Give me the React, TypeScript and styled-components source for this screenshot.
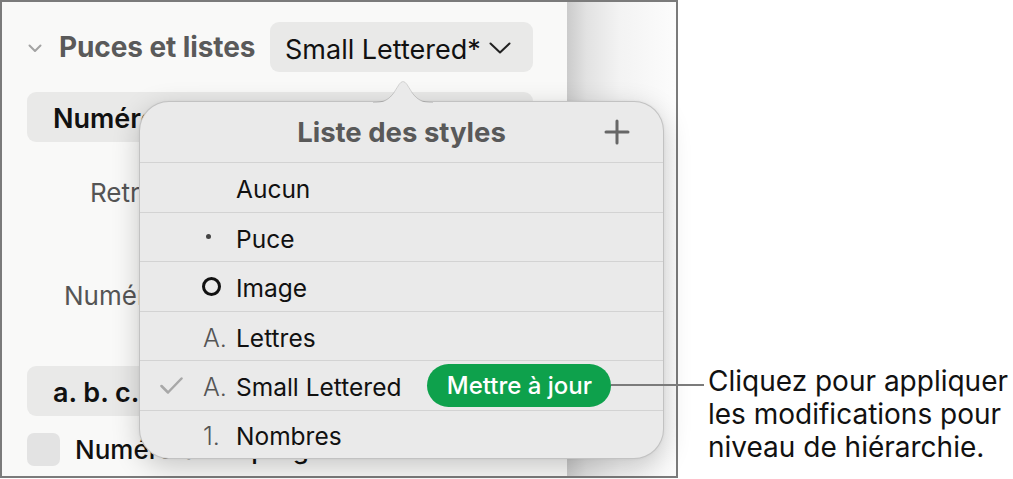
import React from "react";
import styled, { createGlobalStyle } from "styled-components";

const Global = createGlobalStyle`
  html, body { margin: 0; padding: 0; background: #ffffff; }
  body {
    font-family: Inter, "Noto Sans", "Liberation Sans", sans-serif;
    -webkit-font-smoothing: antialiased;
  }
`;

const Page = styled.div`
  display: flex;
  align-items: flex-start;
  width: 1013px;
  height: 479px;
  overflow: hidden;
`;

const Frame = styled.div`
  position: relative;
  display: flex;
  flex: none;
  width: 678px;
  height: 478px;
  box-sizing: border-box;
  border: 2px solid #7b7b7b;
`;

const Sidebar = styled.div`
  flex: none;
  width: 565px;
  box-sizing: border-box;
  padding: 20px 34px 0 25px;
  background: #f9f9f8;
  display: flex;
  flex-direction: column;
  overflow: hidden;
`;

const Shade = styled.div`
  flex: 1;
  background: linear-gradient(90deg, #cbcbcb 0%, #e2e2e2 18%, #f3f3f3 48%, #fcfcfc 100%);
`;

const SectionHeader = styled.div`
  display: flex;
  align-items: center;
  height: 50px;
  flex: none;
`;

const Disclosure = styled.svg`
  flex: none;
  width: 14px;
  height: 9px;
  margin: 2px 17px 0 1px;
`;

const SectionTitle = styled.span`
  font-size: 28px;
  font-weight: 700;
  color: #5a5a5a;
  white-space: nowrap;
  letter-spacing: -0.1px;
`;

const StyleSelect = styled.div`
  margin-left: auto;
  flex: none;
  width: 263px;
  height: 50px;
  box-sizing: border-box;
  border-radius: 9px;
  background: #e9e9e8;
  display: flex;
  align-items: center;
  padding: 4px 0 0 15px;
  gap: 8px;
  font-size: 27px;
  color: #111;
  white-space: nowrap;
`;

const SelectChevron = styled.svg`
  width: 22px;
  height: 12px;
  flex: none;
  margin-top: -2px;
`;

const WideButton = styled.div<{ $top: number }>`
  flex: none;
  margin-top: ${(p) => p.$top}px;
  height: 50px;
  box-sizing: border-box;
  padding: 3px 0 0 26px;
  border-radius: 9px;
  background: #e9e9e8;
  display: flex;
  align-items: center;
  font-size: 27px;
  font-weight: 600;
  color: #111;
  white-space: nowrap;
`;

const FieldRow = styled.div<{ $top: number; $indent: number }>`
  flex: none;
  margin-top: ${(p) => p.$top}px;
  height: 50px;
  display: flex;
  align-items: center;
  padding-left: ${(p) => p.$indent}px;
  font-size: 26px;
  color: #555;
  white-space: nowrap;
`;

const CheckRow = styled.div<{ $top: number }>`
  flex: none;
  margin-top: ${(p) => p.$top}px;
  display: flex;
  align-items: center;
  gap: 15px;
  font-size: 26px;
  font-weight: 500;
  color: #111;
  white-space: nowrap;
`;

const CheckBox = styled.div`
  flex: none;
  width: 33px;
  height: 33px;
  border-radius: 7px;
  background: #e3e3e3;
`;

const Popover = styled.div`
  position: absolute;
  left: 137px;
  top: 99px;
  width: 525px;
  height: 358px;
  box-sizing: border-box;
  background: #eaeaea;
  border: 1px solid rgba(0, 0, 0, 0.17);
  border-radius: 30px;
  box-shadow: 0 8px 28px rgba(0, 0, 0, 0.2), 0 0 3px rgba(0, 0, 0, 0.06);
  display: flex;
  flex-direction: column;
`;

const Arrow = styled.svg`
  position: absolute;
  left: 233px;
  top: -24px;
  width: 60px;
  height: 25px;
`;

const PopHeader = styled.div`
  flex: none;
  height: 60px;
  border-bottom: 1px solid #d3d3d3;
  display: grid;
  grid-template-columns: 1fr auto 1fr;
  align-items: center;
`;

const PopTitle = styled.div`
  grid-column: 2;
  font-size: 27.5px;
  font-weight: 700;
  color: #595959;
  white-space: nowrap;
`;

const AddIcon = styled.svg`
  grid-column: 3;
  justify-self: end;
  margin-right: 33px;
  width: 26px;
  height: 26px;
`;

const StyleRow = styled.div<{ $last?: boolean }>`
  flex: none;
  height: ${(p) => (p.$last ? 47 : 48.5)}px;
  border-bottom: ${(p) => (p.$last ? "none" : "1px solid #d3d3d3")};
  display: grid;
  grid-template-columns: 63px 33px auto auto;
  justify-content: start;
  align-items: center;
`;

const CheckCell = styled.div`
  display: flex;
  justify-content: center;
  align-items: center;
`;

const Prefix = styled.div`
  display: flex;
  align-items: center;
  padding-top: 4px;
  font-size: 25px;
  font-weight: 300;
  color: #555;
  min-height: 20px;
`;

const Dot = styled.span`
  width: 5px;
  height: 5px;
  border-radius: 50%;
  background: #444;
  margin: 0 0 4px 3px;
`;

const Ring = styled.span`
  width: 19px;
  height: 19px;
  box-sizing: border-box;
  border: 3px solid #111;
  border-radius: 50%;
  margin: 0 0 4px -1px;
`;

const Label = styled.div`
  padding-top: 4px;
  font-size: 24.5px;
  color: #111;
  white-space: nowrap;
`;

const UpdateButton = styled.div`
  position: relative;
  margin-left: 26px;
  width: 184px;
  height: 43px;
  border-radius: 22px;
  background: #0ea14c;
  color: #fff;
  font-size: 24px;
  font-weight: 500;
  display: flex;
  align-items: center;
  justify-content: center;
  white-space: nowrap;

  &::after {
    content: "";
    position: absolute;
    left: 100%;
    top: 50%;
    margin-top: -1px;
    width: 93px;
    height: 2px;
    background: #7b7b7b;
  }
`;

const Annotation = styled.div`
  margin-left: 30px;
  padding-top: 365px;
  font-size: 28px;
  line-height: 33px;
  color: #111;
  white-space: nowrap;
`;

type Item = { prefix: React.ReactNode; label: string; checked?: boolean };

const items: Item[] = [
  { prefix: null, label: "Aucun" },
  { prefix: <Dot />, label: "Puce" },
  { prefix: <Ring />, label: "Image" },
  { prefix: "A.", label: "Lettres" },
  { prefix: "A.", label: "Small Lettered", checked: true },
  { prefix: "1.", label: "Nombres" },
];

export default function App() {
  return (
    <>
      <Global />
      <Page>
        <Frame>
          <Sidebar>
            <SectionHeader>
              <Disclosure viewBox="0 0 14 9">
                <polyline points="1.5,1.5 7,7 12.5,1.5" fill="none" stroke="#a3a3a3" strokeWidth="2" strokeLinecap="round" strokeLinejoin="round" />
              </Disclosure>
              <SectionTitle>Puces et listes</SectionTitle>
              <StyleSelect>
                Small Lettered*
                <SelectChevron viewBox="0 0 22 12">
                  <polyline points="1.5,1.5 11,10.5 20.5,1.5" fill="none" stroke="#222" strokeWidth="2" strokeLinecap="round" strokeLinejoin="round" />
                </SelectChevron>
              </StyleSelect>
            </SectionHeader>
            <WideButton $top={20}>Numérotation</WideButton>
            <FieldRow $top={25} $indent={63}>Retrait</FieldRow>
            <FieldRow $top={53} $indent={37}>Numérotation</FieldRow>
            <WideButton $top={46}>a. b. c.</WideButton>
            <CheckRow $top={17}>
              <CheckBox />
              Numérotation progressive
            </CheckRow>
          </Sidebar>
          <Shade />
          <Popover>
            <Arrow viewBox="0 0 60 25">
              <path d="M0,25 C11,25 16,22 21,15 L26,7 Q30,1 34,7 L39,15 C44,22 49,25 60,25 Z" fill="#eaeaea" />
              <path d="M0,24.5 C11,24.5 16,21.5 21,14.5 L26,6.5 Q30,0.5 34,6.5 L39,14.5 C44,21.5 49,24.5 60,24.5" fill="none" stroke="rgba(0,0,0,0.14)" strokeWidth="1" />
            </Arrow>
            <PopHeader>
              <PopTitle>Liste des styles</PopTitle>
              <AddIcon viewBox="0 0 26 26">
                <path d="M13 2 V24 M2 13 H24" stroke="#676767" strokeWidth="3" strokeLinecap="round" />
              </AddIcon>
            </PopHeader>
            {items.map((it, i) => (
              <StyleRow key={it.label} $last={i === items.length - 1}>
                <CheckCell>
                  {it.checked && (
                    <svg width="23" height="17" viewBox="0 0 23 17">
                      <polyline points="1.5,9 8,15.5 21.5,1.5" fill="none" stroke="#a8a8a8" strokeWidth="2.5" strokeLinecap="round" strokeLinejoin="round" />
                    </svg>
                  )}
                </CheckCell>
                <Prefix>{it.prefix}</Prefix>
                <Label>{it.label}</Label>
                {it.checked ? <UpdateButton>Mettre à jour</UpdateButton> : <span />}
              </StyleRow>
            ))}
          </Popover>
        </Frame>
        <Annotation>
          Cliquez pour appliquer
          <br />
          les modifications pour
          <br />
          niveau de hiérarchie.
        </Annotation>
      </Page>
    </>
  );
}
